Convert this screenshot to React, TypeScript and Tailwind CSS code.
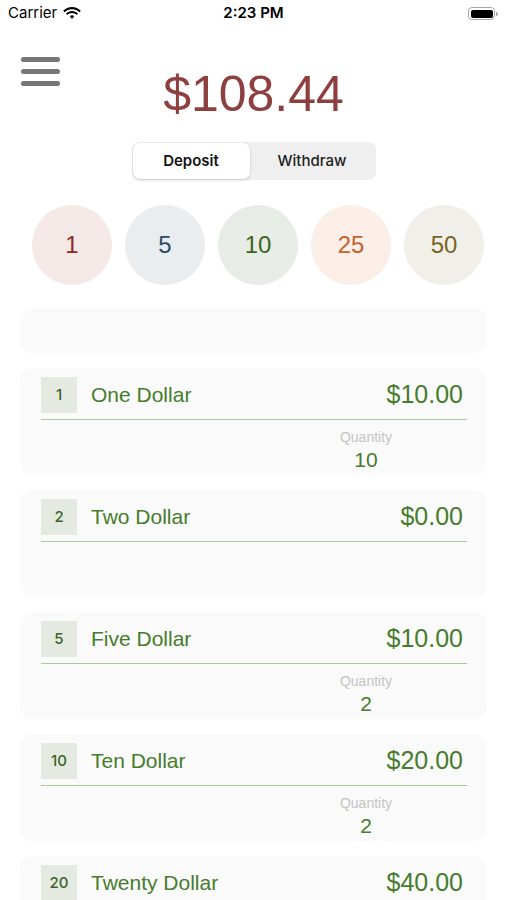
import React from "react";

const coins = [
  { label: "1", bg: "bg-[#f5e9e7]", fg: "text-[#8b2a22]" },
  { label: "5", bg: "bg-[#e9edf0]", fg: "text-[#2e4a66]" },
  { label: "10", bg: "bg-[#e8ece6]", fg: "text-[#3a671b]" },
  { label: "25", bg: "bg-[#faeee7]", fg: "text-[#c5622e]" },
  { label: "50", bg: "bg-[#f1efea]", fg: "text-[#7c6322]" },
];

const bills = [
  { n: "1", name: "One Dollar", total: "$10.00", qty: "10" },
  { n: "2", name: "Two Dollar", total: "$0.00", qty: "" },
  { n: "5", name: "Five Dollar", total: "$10.00", qty: "2" },
  { n: "10", name: "Ten Dollar", total: "$20.00", qty: "2" },
  { n: "20", name: "Twenty Dollar", total: "$40.00", qty: "2" },
];

export default function App() {
  return (
    <div className="w-[507px] h-[900px] overflow-hidden bg-white font-['Inter',sans-serif]">
      <StatusBar />
      <Header />
      <Segmented />
      <div className="mt-[25px] flex gap-[13px] pl-[32px]">
        {coins.map((c) => (
          <div
            key={c.label}
            className={`w-[80px] h-[80px] shrink-0 rounded-full ${c.bg} flex items-center justify-center`}
          >
            <span className={`font-['Liberation_Sans',sans-serif] text-[24px] ${c.fg}`}>{c.label}</span>
          </div>
        ))}
      </div>
      <div className="mt-[23px] mx-[20px] flex flex-col gap-[15px]">
        <div className="h-[45px] rounded-xl bg-[#fafafa]" />
        {bills.map((b) => (
          <BillCard key={b.n} {...b} />
        ))}
      </div>
    </div>
  );
}

const StatusBar = () => {
  return (
    <div className="h-[27px] grid grid-cols-3 items-center px-[8px] text-[15px] text-black">
      <div className="flex items-center gap-[6px]">
        <span>Carrier</span>
        <svg width="18" height="13" viewBox="0 0 18 13">
          <path d="M9 2.2c2.9 0 5.5 1.1 7.4 3l1.4-1.5C15.5 1.4 12.4 0 9 0S2.5 1.4.2 3.7l1.4 1.5c1.9-1.9 4.5-3 7.4-3z" fill="#000" />
          <path d="M9 6.1c1.8 0 3.4.7 4.6 1.9L15 6.5C13.4 5 11.3 4 9 4S4.6 5 3 6.5L4.4 8C5.6 6.8 7.2 6.1 9 6.1z" fill="#000" />
          <path d="M9 8.3c.9 0 1.6.4 2.2 1L9 12 6.8 9.3c.6-.6 1.3-1 2.2-1z" fill="#000" />
        </svg>
      </div>
      <div className="text-center font-semibold">2:23 PM</div>
      <div className="flex justify-end items-center pr-[1px]">
        <div className="w-[27px] h-[13px] rounded-[4px] border border-[#a8a8a8] p-[1.5px]">
          <div className="w-full h-full rounded-[2px] bg-black" />
        </div>
        <div className="w-[2px] h-[4px] rounded-r-sm bg-[#a8a8a8] ml-[1px]" />
      </div>
    </div>
  );
};

const Header = () => {
  return (
    <div className="grid grid-cols-[1fr_auto_1fr] items-start">
      <div className="pl-[21px] pt-[30px] flex flex-col gap-[7px]">
        <div className="w-[39px] h-[5px] rounded-full bg-[#777777]" />
        <div className="w-[39px] h-[5px] rounded-full bg-[#777777]" />
        <div className="w-[39px] h-[5px] rounded-full bg-[#777777]" />
      </div>
      <div className="mt-[42px] font-['Liberation_Sans',sans-serif] text-[50px] leading-[50px] text-[#8e4040]">
        $108.44
      </div>
      <div />
    </div>
  );
};

const Segmented = () => {
  return (
    <div className="mt-[23px] flex justify-center">
      <div className="w-[244px] h-[38px] rounded-lg bg-[#efefef] p-[1px] flex text-[15px] text-[#111]">
        <div className="w-[117px] h-full rounded-[7px] bg-white shadow-[0_1px_3px_rgba(0,0,0,0.18)] flex items-center justify-center font-semibold">
          Deposit
        </div>
        <div className="flex-1 flex items-center justify-center font-medium text-[#222]">Withdraw</div>
      </div>
    </div>
  );
};

const BillCard = ({ n, name, total, qty }: { n: string; name: string; total: string; qty: string }) => {
  return (
    <div className="h-[107px] shrink-0 rounded-xl bg-[#fafafa] pl-[21px] pr-[20px] pt-[9px] font-['Liberation_Sans',sans-serif] text-[#467c2c]">
      <div className="flex items-center h-[36px]">
        <div className="w-[36px] h-[36px] bg-[#e4eae1] flex items-center justify-center font-['Inter',sans-serif] font-medium text-[15px] text-[#3a6325]">
          {n}
        </div>
        <div className="ml-[14px] text-[21px]">{name}</div>
        <div className="ml-auto pr-[4px] text-[25px]">{total}</div>
      </div>
      <div className="mt-[6px] h-px bg-[#a9cc96]" />
      {qty && (
        <div className="flex justify-end">
          <div className="w-[202px] flex flex-col items-center pt-[9px]">
            <div className="text-[14px] leading-[16px] text-[#c4c4c4]">Quantity</div>
            <div className="mt-[3px] text-[21px] leading-[24px]">{qty}</div>
          </div>
        </div>
      )}
    </div>
  );
};
